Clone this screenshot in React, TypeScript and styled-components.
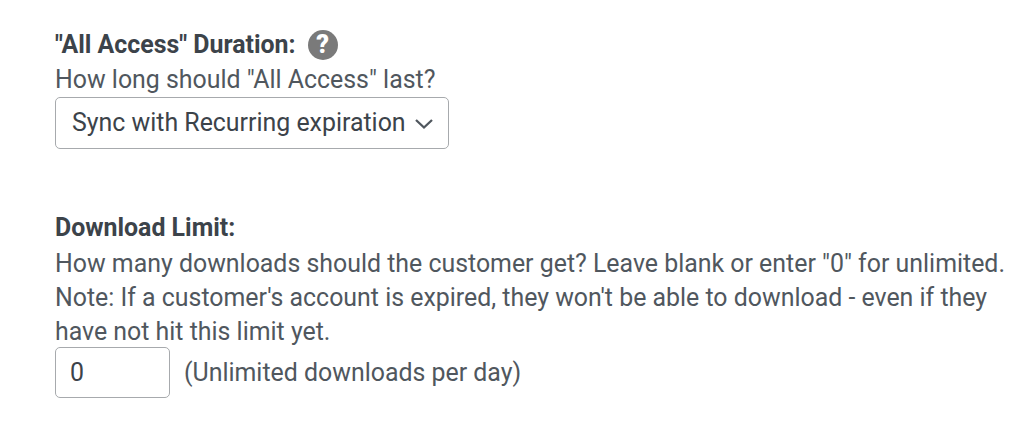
import React from "react";
import styled, { createGlobalStyle } from "styled-components";

const Global = createGlobalStyle`
  html, body {
    margin: 0;
    padding: 0;
    background: #fff;
  }
`;

const Page = styled.div`
  width: 1036px;
  height: 443px;
  overflow: hidden;
  padding: 26px 0 0 55px;
  box-sizing: border-box;
  font-family: Roboto, "Liberation Sans", sans-serif;
  font-size: 24.9px;
  line-height: 34px;
  color: #50575e;
`;

const Section = styled.div`
  margin-bottom: 60px;
`;

const LabelRow = styled.div`
  display: flex;
  align-items: center;
  gap: 12px;
  height: 37px;
`;

const Label = styled.strong`
  font-weight: 700;
  color: #3c434a;
`;

const Help = styled.span`
  width: 30px;
  height: 30px;
  border-radius: 50%;
  background: #7a7a7a;
  color: #fff;
  font-weight: 900;
  font-size: 25px;
  line-height: 30px;
  text-align: center;
`;

const Description = styled.div`
  width: 960px;
`;

const Note = styled(Description)`
  margin-top: 1px;
`;

const Select = styled.div`
  display: flex;
  align-items: center;
  justify-content: space-between;
  width: 394px;
  height: 52px;
  box-sizing: border-box;
  padding: 0 14px 0 16px;
  border: 1px solid #a7aaad;
  border-radius: 5px;
  color: #3c434a;
`;

const InputRow = styled.div`
  display: flex;
  align-items: center;
  gap: 14px;
  margin-top: -2px;
`;

const NumberBox = styled.div`
  width: 115px;
  height: 51px;
  box-sizing: border-box;
  padding-left: 14px;
  line-height: 49px;
  border: 1px solid #a7aaad;
  border-radius: 5px;
  color: #3c434a;
`;

export default function App() {
  return (
    <Page>
      <Global />
      <Section>
        <LabelRow>
          <Label>"All Access" Duration:</Label>
          <Help>?</Help>
        </LabelRow>
        <Description>How long should "All Access" last?</Description>
        <Select>
          Sync with Recurring expiration
          <svg width="20" height="20" viewBox="0 0 20 20" fill="none" stroke="#50575e" strokeWidth="2.3">
            <path d="M2 7l8 7.5L18 7" />
          </svg>
        </Select>
      </Section>
      <Section>
        <LabelRow>
          <Label>Download Limit:</Label>
        </LabelRow>
        <Note>
          How many downloads should the customer get? Leave blank or enter "0" for unlimited. Note: If a customer's
          account is expired, they won't be able to download - even if they have not hit this limit yet.
        </Note>
        <InputRow>
          <NumberBox>0</NumberBox>
          <span>(Unlimited downloads per day)</span>
        </InputRow>
      </Section>
    </Page>
  );
}
